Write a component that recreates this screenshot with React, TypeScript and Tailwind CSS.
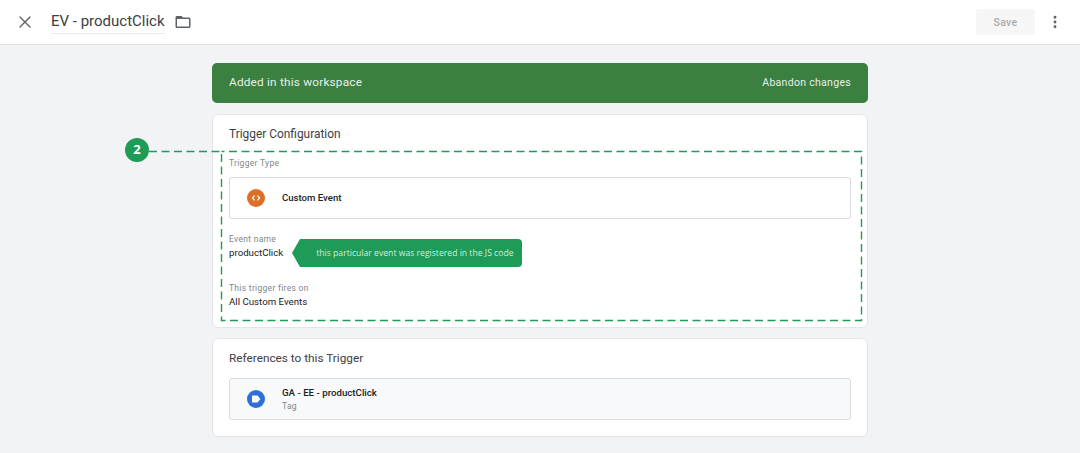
import React from 'react';
import { X, MoreVertical } from 'lucide-react';

function Header() {
  return (
    <div className="flex h-[45px] items-center border-b border-[#dfe1e5] bg-white">
      <button className="ml-[17px] flex h-4 w-4 items-center justify-center text-[#5f6368]">
        <X size={20} strokeWidth={1.6} className="shrink-0" />
      </button>
      <div className="ml-[18px] flex h-[24px] items-center border-b border-[#e8eaed] text-[15px] leading-none text-[#3c4043]">
        EV - productClick
      </div>
      <svg width="18" height="18" viewBox="0 0 24 24" fill="#5f6368" className="ml-[9px]">
        <path d="M20 6h-8l-2-2H4c-1.1 0-2 .9-2 2v12c0 1.1.9 2 2 2h16c1.1 0 2-.9 2-2V8c0-1.1-.9-2-2-2zm0 12H4V8h16v10z" />
      </svg>
      <div className="flex-1" />
      <button className="flex h-[26px] w-[59px] items-center justify-center rounded-[3px] bg-[#f6f6f6] pt-px text-[10.5px] font-medium tracking-wide text-[#ababab]">
        Save
      </button>
      <MoreVertical size={16} strokeWidth={2.4} className="ml-3 mr-[17px] text-[#5f6368]" />
    </div>
  );
}

function Field({ label, value }: { label: string; value: string }) {
  return (
    <div>
      <div className="text-[8.5px] leading-[14px] tracking-[0.3px] text-[#80868b]">{label}</div>
      <div className="text-[9.7px] leading-[14px] text-[#202124]">{value}</div>
    </div>
  );
}

function Note() {
  return (
    <div className="ml-[9px] flex h-[28px] items-stretch">
      <svg width="10" height="28" viewBox="0 0 10 28" className="shrink-0">
        <path d="M10 0 L8 0 L0 14 L8 28 L10 28 Z" fill="#1e9b57" />
      </svg>
      <div className="flex w-[220px] items-center rounded-r-[4px] bg-[#1e9b57] pl-[14px] font-['Open_Sans',sans-serif] text-[8.65px] text-[#cfeedd]">
        this particular event was registered in the JS code
      </div>
    </div>
  );
}

export default function App() {
  return (
    <div className="relative h-[453px] w-[1080px] overflow-hidden bg-[#f1f3f4] font-['Roboto',sans-serif]">
      <Header />

      <div className="mx-auto mt-[18px] flex w-[656px] flex-col">
        <div className="flex h-[40px] items-center justify-between rounded-[5px] bg-[#3b7f41] px-[17px] text-white">
          <span className="text-[11.8px] tracking-[0.2px] text-[#e6f1e7]">Added in this workspace</span>
          <span className="text-[10.5px] tracking-[0.3px] text-[#e6f1e7]">Abandon changes</span>
        </div>

        <div className="mt-[11px] h-[214px] rounded-[6px] border border-[#e3e5e8] bg-white px-[16px]">
          <div className="pt-[11px] text-[11.9px] leading-[16px] text-[#3c4043]">Trigger Configuration</div>
          <div className="mt-[15px] text-[8.5px] leading-[12px] tracking-[0.3px] text-[#80868b]">Trigger Type</div>
          <div className="mt-[8px] flex h-[42px] items-center rounded-[3px] border border-[#dadce0] bg-white">
            <div className="ml-[17px] flex h-[18px] w-[18px] items-center justify-center rounded-full bg-[#dd7029]">
              <svg width="10" height="10" viewBox="0 0 10 10" fill="none" stroke="white" strokeWidth="1.2">
                <path d="M3.6 2.6 L1.4 5 L3.6 7.4 M6.4 2.6 L8.6 5 L6.4 7.4" />
              </svg>
            </div>
            <div className="ml-[17px] text-[9.6px] font-medium text-[#202124]">Custom Event</div>
          </div>
          <div className="mt-[13px] flex items-end">
            <Field label="Event name" value="productClick" />
            <div className="mb-[-7px]">
              <Note />
            </div>
          </div>
          <div className="mt-[21px]">
            <Field label="This trigger fires on" value="All Custom Events" />
          </div>
        </div>

        <div className="mt-[10px] h-[99px] rounded-[6px] border border-[#e3e5e8] bg-white px-[16px]">
          <div className="pt-[11px] text-[11.8px] leading-[16px] text-[#3c4043]">References to this Trigger</div>
          <div className="mt-[12px] flex h-[42px] items-center rounded-[3px] border border-[#dadce0] bg-[#f8f9fa]">
            <div className="ml-[17px] flex h-[18px] w-[18px] items-center justify-center rounded-full bg-[#2f6fd8]">
              <svg width="10" height="8" viewBox="0 0 10 8">
                <path d="M1 1 Q1 0.5 1.5 0.5 L6.5 0.5 L9.4 4 L6.5 7.5 L1.5 7.5 Q1 7.5 1 7 Z" fill="white" />
              </svg>
            </div>
            <div className="ml-[17px]">
              <div className="text-[9.7px] font-medium leading-[14px] text-[#202124]">GA - EE - productClick</div>
              <div className="mt-[-1px] text-[8.5px] leading-[14px] tracking-[0.3px] text-[#80868b]">Tag</div>
            </div>
          </div>
        </div>
      </div>

      {/* annotation over the trigger card */}
      <svg width="1080" height="453" className="pointer-events-none absolute left-0 top-0">
        <path d="M149 151.5 H221.5 V320.5 H861.5 V151.5 H221.5" fill="none" stroke="#1e9b57" strokeWidth="1.4" strokeDasharray="8 4.5" />
      </svg>
      <div className="absolute left-[125px] top-[138px] flex h-6 w-6 items-center justify-center rounded-full bg-[#1e9b57] font-['Open_Sans',sans-serif] text-[13px] font-bold text-white">
        2
      </div>
    </div>
  );
}
